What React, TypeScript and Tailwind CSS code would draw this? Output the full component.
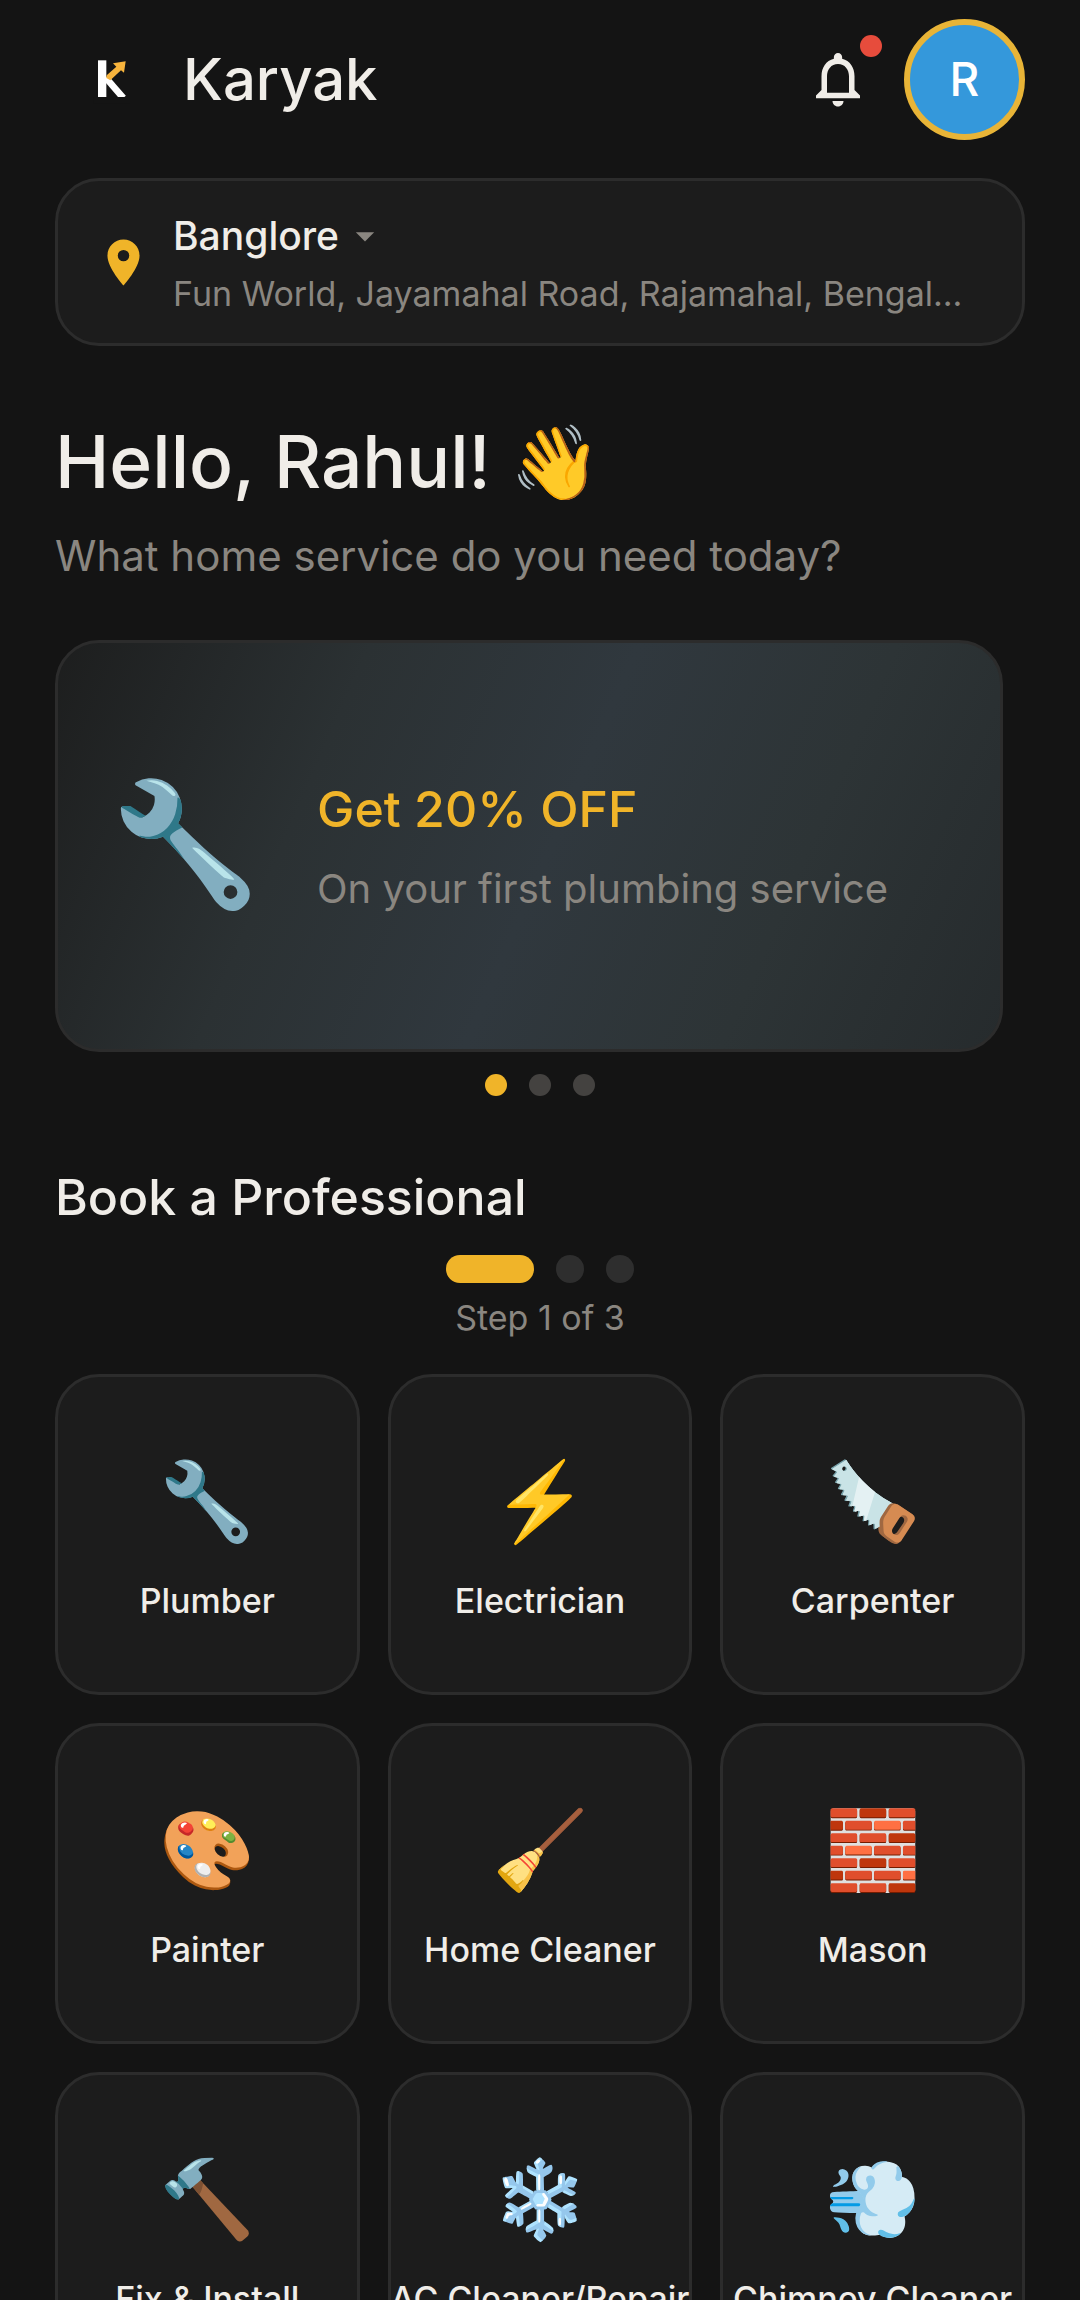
import { MdArrowDropDown, MdNotificationsNone, MdPlace } from "react-icons/md";

const services = [
  { icon: "🔧", name: "Plumber" },
  { icon: "⚡", name: "Electrician" },
  { icon: "🪚", name: "Carpenter" },
  { icon: "🎨", name: "Painter" },
  { icon: "🧹", name: "Home Cleaner" },
  { icon: "🧱", name: "Mason" },
  { icon: "🔨", name: "Fix & Install" },
  { icon: "❄️", name: "AC Cleaner/Repair" },
  { icon: "💨", name: "Chimney Cleaner" },
];

function Logo() {
  return (
    <svg viewBox="45 72 330 330" className="size-[110px]" role="img" aria-label="Karyak logo">
      <line x1="197" y1="233" x2="250" y2="294" stroke="#ffffff" strokeWidth="20" />
      <rect x="160" y="291" width="110" height="20" fill="#141414" />
      <rect x="174" y="181" width="25" height="110" fill="#ffffff" />
      <polygon
        points="200,226 229,200 219,190 257,184 252,218 243,211 211,241 199,234"
        fill="#f7b43c"
      />
    </svg>
  );
}

function Header() {
  return (
    <header className="flex h-[158px] shrink-0 items-center px-[55px]">
      <Logo />
      <h1 className="ml-[18px] flex-1 text-[58px] font-medium leading-[72px]">Karyak</h1>
      <button
        type="button"
        aria-label="Notifications"
        className="relative flex size-[132px] items-center justify-center"
      >
        <MdNotificationsNone className="size-[66px]" />
        <span className="absolute right-[22px] top-[22px] size-[22px] rounded-full bg-[#e74c3c]" />
      </button>
      <button
        type="button"
        aria-label="Profile"
        className="flex size-[121px] items-center justify-center rounded-full border-[6px] border-[#e8b437] bg-[#3498db] text-[46px] font-medium text-white"
      >
        R
      </button>
    </header>
  );
}

function LocationCard() {
  return (
    <button
      type="button"
      className="flex w-full items-center gap-[22px] rounded-[44px] border-[3px] border-[#2c2c2c] bg-[#1c1c1c] px-[38px] py-[27px] text-left"
    >
      <MdPlace className="size-[55px] shrink-0 text-[#f0b429]" />
      <span className="flex min-w-0 flex-1 flex-col gap-2">
        <span className="flex items-center text-[39px] font-medium leading-[56px]">
          Banglore
          <MdArrowDropDown className="ml-1 size-[44px] text-[#8a8680]" />
        </span>
        <span className="truncate text-[34px] leading-[44px] text-[#8a8680]">
          Fun World, Jayamahal Road, Rajamahal, Bengal...
        </span>
      </span>
    </button>
  );
}

function PromoCarousel() {
  return (
    <section aria-label="Offers" className="mt-14">
      <article className="mr-[22px] flex h-[412px] items-center rounded-[44px] border-[3px] border-[#2c2c2c] bg-[linear-gradient(113.5deg,#1d1e1e,#2b3133_28%,#30383e_52%,#2d3436_75%,#262b2d)] px-[52px]">
        <span className="pb-2 text-[121px] leading-[150px]">🔧</span>
        <div className="ml-14 flex flex-col gap-[22px]">
          <h3 className="text-[50px] font-medium leading-[64px] text-[#f0b429]">Get 20% OFF</h3>
          <p className="text-[40px] leading-[52px] text-[#8a8680]">On your first plumbing service</p>
        </div>
      </article>
      <div className="mt-[22px] flex justify-center gap-[22px]">
        <button type="button" aria-label="Offer 1" className="size-[22px] rounded-full bg-[#f0b429]" />
        <button type="button" aria-label="Offer 2" className="size-[22px] rounded-full bg-[#444240]" />
        <button type="button" aria-label="Offer 3" className="size-[22px] rounded-full bg-[#444240]" />
      </div>
    </section>
  );
}

function Booking() {
  return (
    <section className="mt-[69px]">
      <h2 className="text-[50px] font-medium leading-[64px]">Book a Professional</h2>
      <div className="mt-[26px] flex justify-center gap-[22px]">
        <span className="h-[28px] w-[88px] rounded-full bg-[#f0b429]" />
        <span className="size-[28px] rounded-full bg-[#2e2e2e]" />
        <span className="size-[28px] rounded-full bg-[#2e2e2e]" />
      </div>
      <p className="mt-[13px] text-center text-[34px] leading-[44px] text-[#8a8680]">Step 1 of 3</p>
      <div className="mt-[34px] grid grid-cols-3 gap-[28px]">
        {services.map((service) => (
          <button
            key={service.name}
            type="button"
            className="flex h-[321px] flex-col items-center justify-center gap-[33px] rounded-[44px] border-[3px] border-[#2c2c2c] bg-[#1c1c1c] pt-2"
          >
            <span className="text-[77px] leading-[92px]">{service.icon}</span>
            <span className="whitespace-nowrap text-[34px] font-medium leading-[44px]">{service.name}</span>
          </button>
        ))}
      </div>
    </section>
  );
}

export default function App() {
  return (
    <div className="flex h-screen flex-col bg-[#141414] font-['Inter',sans-serif] text-[#f0ede8]">
      <Header />
      <main className="min-h-0 flex-1 overflow-y-auto px-[55px] pb-[55px] pt-5 [scrollbar-width:none]">
        <LocationCard />
        <h2 className="mt-[70px] text-[73px] font-medium leading-[92px]">Hello, Rahul! 👋</h2>
        <p className="mt-5 text-[42px] leading-[56px] text-[#8a8680]">What home service do you need today?</p>
        <PromoCarousel />
        <Booking />
      </main>
    </div>
  );
}
